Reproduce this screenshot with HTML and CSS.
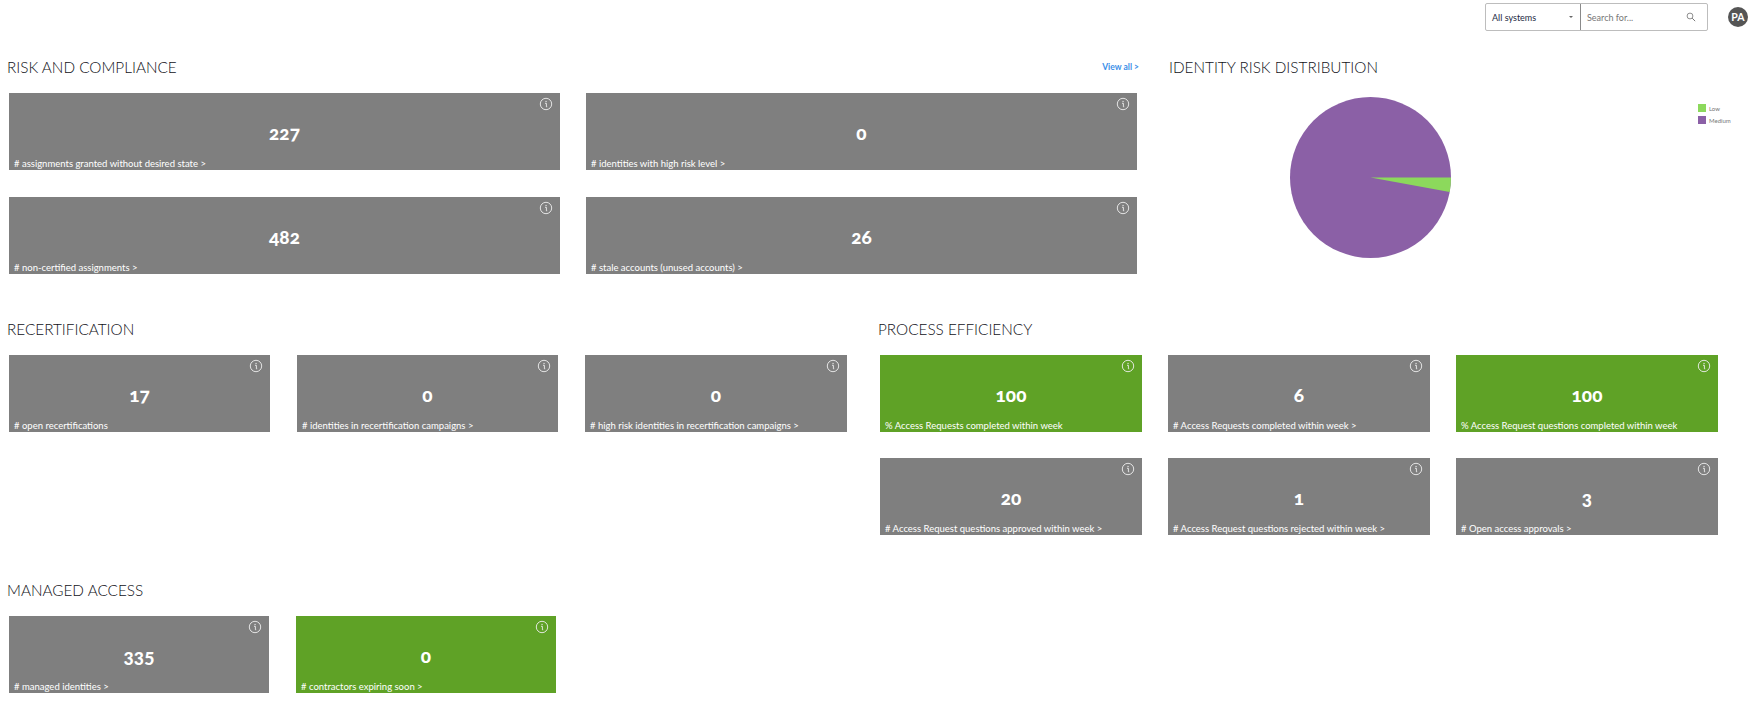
FILE: index.html
```html
<!DOCTYPE html>
<html lang="en">
<head>
<meta charset="utf-8">
<title>Dashboard</title>
<link rel="stylesheet" href="styles.css">
</head>
<body>
<svg class="sprite" width="0" height="0" aria-hidden="true">
  <symbol id="info" viewBox="0 0 14 14">
    <circle cx="7" cy="7" r="5.7" fill="none" stroke="currentColor" stroke-width="0.9"/>
    <path d="M6 6.3h1.4V9.8H8.2" fill="none" stroke="currentColor" stroke-width="0.9"/>
    <rect x="6.5" y="3.9" width="1.1" height="1.2" fill="currentColor"/>
  </symbol>
</svg>
<header class="topbar">
  <div class="searchbox">
    <div class="scope"><span>All systems</span><i class="caret"></i></div>
    <div class="search"><span>Search for...</span>
      <svg class="mag" viewBox="0 0 12 12"><circle cx="4.8" cy="4.8" r="3.5" fill="none" stroke="currentColor" stroke-width="1"/><path d="M7.4 7.4 11 11" stroke="currentColor" stroke-width="1.2"/></svg>
    </div>
  </div>
  <div class="avatar">PA</div>
</header>
<main>
  <div class="row row-top">
    <section class="risk">
      <div class="head"><h2>RISK AND COMPLIANCE</h2><a class="viewall">View all &gt;</a></div>
      <div class="cards two">
        <div class="card"><svg class="info"><use href="#info"/></svg><b>227</b><p># assignments granted without desired state &gt;</p></div>
        <div class="card"><svg class="info"><use href="#info"/></svg><b>0</b><p># identities with high risk level &gt;</p></div>
        <div class="card"><svg class="info"><use href="#info"/></svg><b>482</b><p># non-certified assignments &gt;</p></div>
        <div class="card"><svg class="info"><use href="#info"/></svg><b>26</b><p># stale accounts (unused accounts) &gt;</p></div>
      </div>
    </section>
    <section class="dist">
      <div class="head"><h2>IDENTITY RISK DISTRIBUTION</h2></div>
      <div class="chart">
        <svg class="pie" viewBox="0 0 161 161">
          <circle cx="80.5" cy="80.5" r="80.5" fill="#8b60a6"/>
          <path d="M80.5 80.5 L161 80.5 A80.5 80.5 0 0 1 159.7 94.9 Z" fill="#8cd95c"/>
        </svg>
        <ul class="legend">
          <li><i class="low"></i>Low</li>
          <li><i class="med"></i>Medium</li>
        </ul>
      </div>
    </section>
  </div>
  <div class="row row-mid">
    <section class="recert">
      <div class="head"><h2>RECERTIFICATION</h2></div>
      <div class="cards three">
        <div class="card"><svg class="info"><use href="#info"/></svg><b>17</b><p># open recertifications</p></div>
        <div class="card"><svg class="info"><use href="#info"/></svg><b>0</b><p># identities in recertification campaigns &gt;</p></div>
        <div class="card"><svg class="info"><use href="#info"/></svg><b>0</b><p># high risk identities in recertification campaigns &gt;</p></div>
      </div>
    </section>
    <section class="process">
      <div class="head"><h2>PROCESS EFFICIENCY</h2></div>
      <div class="cards three">
        <div class="card ok"><svg class="info"><use href="#info"/></svg><b>100</b><p>% Access Requests completed within week</p></div>
        <div class="card"><svg class="info"><use href="#info"/></svg><b>6</b><p># Access Requests completed within week &gt;</p></div>
        <div class="card ok"><svg class="info"><use href="#info"/></svg><b>100</b><p>% Access Request questions completed within week</p></div>
        <div class="card"><svg class="info"><use href="#info"/></svg><b>20</b><p># Access Request questions approved within week &gt;</p></div>
        <div class="card"><svg class="info"><use href="#info"/></svg><b>1</b><p># Access Request questions rejected within week &gt;</p></div>
        <div class="card"><svg class="info"><use href="#info"/></svg><b>3</b><p># Open access approvals &gt;</p></div>
      </div>
    </section>
  </div>
  <div class="row row-bot">
    <section class="managed">
      <div class="head"><h2>MANAGED ACCESS</h2></div>
      <div class="cards three">
        <div class="card"><svg class="info"><use href="#info"/></svg><b>335</b><p># managed identities &gt;</p></div>
        <div class="card ok"><svg class="info"><use href="#info"/></svg><b>0</b><p># contractors expiring soon &gt;</p></div>
      </div>
    </section>
  </div>
</main>
</body>
</html>
```
FILE: styles.css
```css
* { box-sizing: border-box; }
html, body { margin: 0; padding: 0; }
body {
  width: 1750px;
  height: 711px;
  overflow: hidden;
  background: #fff;
  font-family: "Lato", "Open Sans", sans-serif;
  color: #2b2b33;
}
.sprite { position: absolute; }
.topbar {
  height: 31px;
  margin-top: 3px;
  display: flex;
  justify-content: flex-end;
  align-items: flex-start;
  padding-right: 2px;
}
.searchbox {
  display: flex;
  width: 223px;
  height: 28px;
  border: 1px solid #bdbdbd;
  border-radius: 2px;
  font-size: 9px;
}
.scope {
  width: 95px;
  display: flex;
  align-items: center;
  justify-content: space-between;
  padding: 0 7px 0 6px;
  border-right: 1px solid #8a8a8a;
  color: #1d2a44;
}
.caret {
  width: 0;
  height: 0;
  border-left: 2.5px solid transparent;
  border-right: 2.5px solid transparent;
  border-top: 2.5px solid #666;
}
.search {
  flex: 1;
  display: flex;
  align-items: center;
  justify-content: space-between;
  padding: 0 11px 0 6px;
  color: #777;
}
.mag { width: 10px; height: 10px; color: #777; }
.avatar {
  width: 20px;
  height: 20px;
  margin: 4px 0 0 20px;
  border-radius: 50%;
  background: #555;
  color: #fff;
  font-size: 10.5px;
  font-weight: 700;
  display: flex;
  align-items: center;
  justify-content: center;
}
.row { display: flex; }
.row-top { height: 262px; }
.row-mid { height: 261px; }
section { display: flex; flex-direction: column; }
.risk { width: 1139px; }
.dist { flex: 1; margin-left: 23px; }
.recert { width: 871px; }
.process { flex: 1; }
.managed { width: 871px; }
.head {
  height: 59px;
  padding: 23px 0 0 7px;
  display: flex;
  justify-content: space-between;
  align-items: flex-start;
}
h2 {
  margin: 0;
  font-size: 15.3px;
  line-height: 20px;
  font-weight: 300;
  color: #111118;
}
.viewall {
  font-size: 8.5px;
  line-height: 21px;
  font-weight: 700;
  color: #3b8fe8;
}
.cards { display: grid; margin-left: 9px; }
.two { grid-template-columns: 551px 551px; column-gap: 26px; row-gap: 27px; }
.three { grid-template-columns: 261px 261px 262px; column-gap: 27px; row-gap: 26px; }
.process .three { margin-left: 9px; grid-template-columns: 262px 262px 262px; column-gap: 26px; }
.managed .three { grid-template-columns: 260px 260px; column-gap: 27px; }
.card {
  position: relative;
  height: 77px;
  background: #7f7f7f;
  color: #fff;
  display: flex;
  align-items: center;
  justify-content: center;
}
.card.ok { background: #5fa226; }
.card b {
  font-size: 19px;
  font-weight: 900;
  margin-top: 2px;
  font-variant-numeric: oldstyle-nums;
}
.card p {
  position: absolute;
  left: 5px;
  bottom: 0;
  margin: 0;
  font-size: 9.5px;
  line-height: 12px;
  white-space: nowrap;
}
.info {
  position: absolute;
  top: 4px;
  right: 7px;
  width: 14px;
  height: 14px;
  color: #eee;
}
.chart { position: relative; flex: 1; }
.pie {
  position: absolute;
  left: 128px;
  top: 4px;
  width: 161px;
  height: 161px;
}
.legend {
  position: absolute;
  left: 536px;
  top: 9px;
  margin: 0;
  padding: 0;
  list-style: none;
  font-size: 6px;
  color: #777;
}
.legend li { display: flex; align-items: center; height: 12px; gap: 3px; }
.legend i { width: 8px; height: 8px; display: block; }
.low { background: #8cd95c; }
.med { background: #8b60a6; }
```
